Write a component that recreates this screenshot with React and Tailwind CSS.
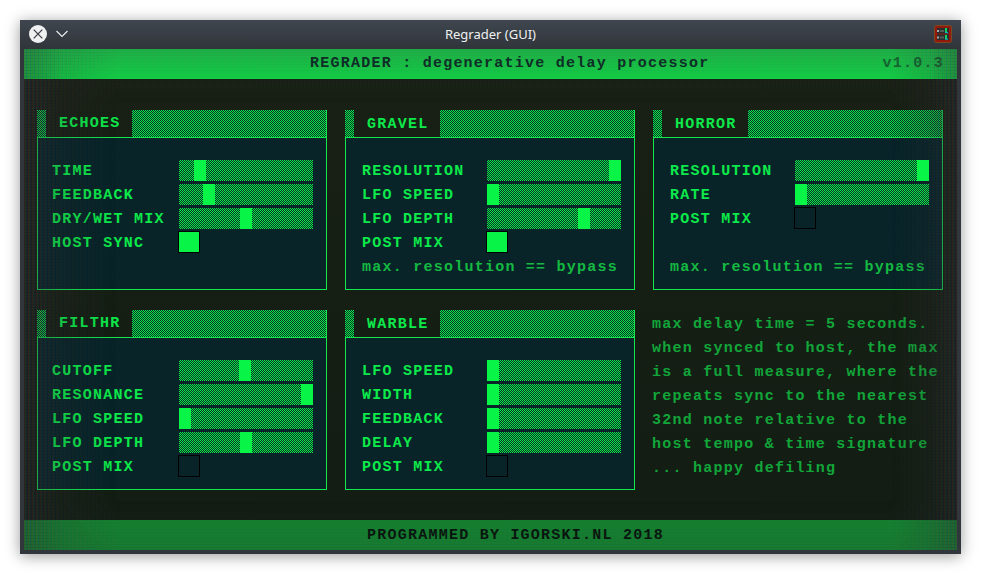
const check = 'bg-[conic-gradient(#0cf446_25%,transparent_0_50%,#0cf446_0_75%,transparent_0)] bg-[length:2px_2px]';
const mono = "font-['Liberation_Mono',monospace] font-bold text-[15px] tracking-[1.24px] whitespace-pre";

function Slider({ value }) {
  return (
    <div className={`relative z-10 h-[21px] w-[134px] ${check}`}>
      <div className="h-full w-3 bg-[#08f548]" style={{ marginLeft: value }} />
    </div>
  );
}

function Toggle({ on }) {
  return (
    <div className={`-mt-px -ml-px size-[22px] border border-black ${on ? 'bg-[#08f548]' : ''}`} />
  );
}

function Panel({ title, rows, note, shifted = false }) {
  return (
    <section className="flex h-[180px] w-[290px] flex-col border-r border-[#14e64e]">
      <header className="flex h-[27px] shrink-0">
        <div className={`w-[9px] bg-[#082428] bg-[position:1px_0] ${check}`} />
        <h2 className={`w-[86px] leading-5 text-[#0de94a] ${mono} ${shifted ? 'pt-[5px] pl-[13px]' : 'pt-1 pl-[13px]'}`}>{title}</h2>
        <div className={`flex-1 bg-[#082428] ${check}`} />
      </header>
      <div className={`flex-1 border-y border-l border-[#14e64e] bg-[#082428] pt-[22px] ${shifted ? 'pl-4' : 'pl-[14px]'}`}>
        {rows.map(([label, value]) => (
          <div key={label} className="flex h-6">
            <span className={`leading-[23px] text-[#0de94a] ${mono} ${shifted ? 'w-[125px]' : 'w-[127px]'}`}>{label}</span>
            {typeof value === 'number' ? <Slider value={value} /> : <Toggle on={value} />}
          </div>
        ))}
        {note && <p className={`leading-6 text-[#15b942] ${rows.length === 3 ? 'mt-6' : ''} ${mono}`}>{note}</p>}
      </div>
    </section>
  );
}

const edge =
  'pointer-events-none absolute inset-0 [mask-image:linear-gradient(to_right,#000,rgba(0,0,0,.35)_4%,transparent_10%,transparent_93%,rgba(0,0,0,.35)_97%,#000),linear-gradient(to_bottom,rgba(0,0,0,.3),transparent_11%,transparent_90%,rgba(0,0,0,.3))]';

export default function App() {
  return (
    <main className="h-[574px] w-[981px] overflow-hidden bg-white p-5">
      <div className="flex h-[534px] w-[941px] flex-col bg-[#30363b] shadow-[0_2px_14px_rgba(0,0,0,.4)]">
        <div className="flex h-[29px] shrink-0 items-center bg-linear-to-b from-[#40464f] to-[#2f3539] pr-[9px] pb-px pl-[9px]">
          <div className="flex w-[60px] items-center gap-[9px]">
            <svg className="size-[18px]" viewBox="0 0 18 18">
              <circle cx="9" cy="9" r="9" fill="#eff0f1" />
              <path d="M4.7 4.7l8.6 8.6m0-8.6l-8.6 8.6" stroke="#343a40" strokeWidth="1.2" />
            </svg>
            <svg className="h-[8px] w-[12px]" viewBox="0 0 12 8">
              <path d="M.5 1l5.5 5.5L11.500 1" fill="none" stroke="#eff0f1" strokeWidth="1.1" />
            </svg>
          </div>
          <h1 className="flex-1 pt-px text-center font-['Noto_Sans',sans-serif] text-[13px] text-[#eff0f1]">Regrader (GUI)</h1>
          <div className="flex w-[60px] justify-end">
            <svg className="size-[18px]" viewBox="0 0 18 18">
              <rect x=".5" y=".5" width="17" height="17" rx="2" fill="#94180c" stroke="#7a4c22" />
              <path d="M3 3h12v5.5H3zM3 9.5h12V15H3z" fill="#2a2e2e" />
              <path d="M3 5h2v2H3zM3 11.500h2v2H3z" fill="#aaa" />
              <path d="M6 5h4v2H6zM6 11.500h4v2H6z" fill="#565a5a" />
              <path d="M11 3h2v4h-2zM11 10h2v4h-2z" fill="#10d060" />
              <path d="M11 7h3v1.200h-3zM11 13.500h3v1.200h-3z" fill="#10b0b8" />
            </svg>
          </div>
        </div>
        <div className="relative mx-1 flex h-[501px] w-[933px] flex-col bg-linear-to-b from-[#192015] to-[#121d13]">
          <header className={`flex h-[30px] shrink-0 bg-linear-to-b from-[#1cc24a] to-[#10d846] leading-[30px] text-[#0c2e26] ${mono}`}>
            <span className="flex-1 pl-[286px]">REGRADER : degenerative delay processor</span>
            <span className="pr-[13px] text-[#126b30]">v1.0.3</span>
          </header>
          <div className="grid grid-cols-[290px_290px_290px] gap-x-[18px] gap-y-5 pt-[31px] pl-[13px]">
            <Panel title="ECHOES" rows={[['TIME', 15], ['FEEDBACK', 24], ['DRY/WET MIX', 61], ['HOST SYNC', true]]} />
            <Panel title="GRAVEL" shifted rows={[['RESOLUTION', 122], ['LFO SPEED', 0], ['LFO DEPTH', 91], ['POST MIX', true]]} note="max. resolution == bypass" />
            <Panel title="HORROR" shifted rows={[['RESOLUTION', 122], ['RATE', 0], ['POST MIX', false]]} note="max. resolution == bypass" />
            <Panel title="FILTHR" rows={[['CUTOFF', 60], ['RESONANCE', 122], ['LFO SPEED', 0], ['LFO DEPTH', 61], ['POST MIX', false]]} />
            <Panel title="WARBLE" shifted rows={[['LFO SPEED', 0], ['WIDTH', 0], ['FEEDBACK', 0], ['DELAY', 0], ['POST MIX', false]]} />
            <p className={`-ml-px pt-[3px] leading-6 text-[#12a63a] ${mono}`}>
              {'max delay time = 5 seconds.\nwhen synced to host, the max\nis a full measure, where the\nrepeats sync to the nearest\n32nd note relative to the\nhost tempo & time signature\n... happy defiling'}
            </p>
          </div>
          <footer className={`mt-auto h-[30px] bg-[#148530] pt-px pl-[343px] leading-[30px] text-[#06140c] ${mono}`}>PROGRAMMED BY IGORSKI.NL 2018</footer>
          <div className={`bg-[#3c3c46]/30 ${edge}`} />
          <div className={`bg-[repeating-linear-gradient(to_right,rgba(100,30,20,.22)_0_1px,rgba(20,80,30,.2)_1px_2px,rgba(25,30,95,.25)_2px_3px,rgba(0,0,0,.1)_3px_4px)] ${edge}`} />
          <div className={`bg-[repeating-linear-gradient(to_bottom,rgba(0,0,0,.07)_0_1px,transparent_1px_3px)] ${edge}`} />
        </div>
      </div>
    </main>
  );
}
